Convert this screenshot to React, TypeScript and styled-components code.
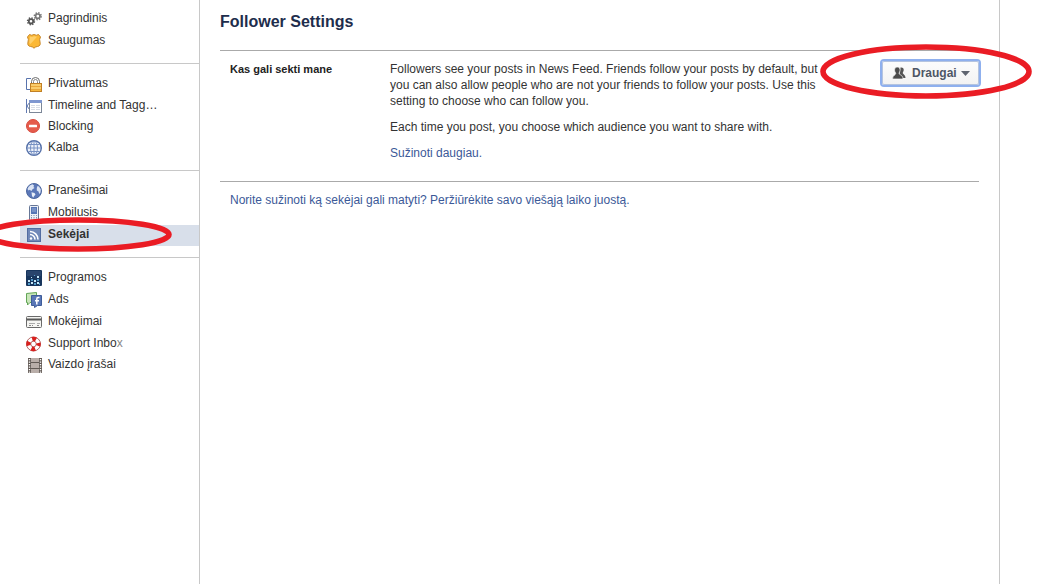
import React from 'react';
import styled, { createGlobalStyle, css } from 'styled-components';

const GlobalStyle = createGlobalStyle`
  * { box-sizing: border-box; }
  body {
    margin: 0;
    background: #fff;
    color: #333;
    font-family: "Liberation Sans", Arial, sans-serif;
    font-size: 12px;
    line-height: 16px;
    overflow-x: hidden;
  }
`;

const Page = styled.div`
  display: flex;
  min-height: 100vh;
  padding-right: 47px;
`;

const Sidebar = styled.nav`
  flex: 0 0 200px;
  padding: 9px 0 0 20px;
  border-right: 1px solid #c8c8c8;
`;

const NavGroup = styled.ul`
  list-style: none;
  margin: 0;
  padding: 0;
  & + & {
    margin-top: 10px;
    padding-top: 10px;
    border-top: 1px solid #c8c8c8;
  }
`;

const NavItem = styled.li<{ $tight?: boolean }>`
  position: relative;
  padding-bottom: ${p => (p.$tight ? 0 : 1)}px;
`;

const NavLink = styled.a<{ $selected?: boolean }>`
  display: flex;
  align-items: flex-start;
  gap: 6px;
  height: 21px;
  padding: 1px 0 0 6px;
  color: #333;
  text-decoration: none;
  ${p => p.$selected && css`
    background: #d8dfea;
    font-weight: bold;
  `}
`;

const NavIcon = styled.svg`
  flex: none;
  width: 16px;
  height: 16px;
  margin-top: 1px;
`;

const Faded = styled.span`
  color: #888;
`;

const Main = styled.main`
  flex: 1;
  min-width: 0;
  padding: 10px 20px;
  border-right: 1px solid #c8c8c8;
`;

const Title = styled.h1`
  margin: 0;
  padding: 2px 0 18px;
  color: #1e2d4c;
  font-size: 16px;
  line-height: 20px;
`;

const Setting = styled.section`
  display: flex;
  align-items: flex-start;
  padding: 10px 0 20px 10px;
  border-top: 1px solid #aaa;
  border-bottom: 1px solid #aaa;
`;

const SettingName = styled.h2`
  flex: 0 0 160px;
  margin: 0;
  color: #222;
  font-size: 11px;
  line-height: 16px;
`;

const Description = styled.div`
  flex: 0 1 440px;
  display: flex;
  flex-direction: column;
  gap: 10px;
`;

const Paragraph = styled.p`
  margin: 0;
`;

const TextLink = styled.a`
  color: #3b5998;
  text-decoration: none;
`;

const Footer = styled.p`
  margin: 0;
  padding: 10px;
`;

const Audience = styled.div`
  position: relative;
  flex: none;
  width: 97px;
  height: 24px;
  margin-left: auto;
`;

const AudienceSelect = styled.select`
  display: block;
  appearance: none;
  width: 100%;
  height: 100%;
  padding: 0 20px 0 29px;
  border: 1px solid #b5c4df;
  border-radius: 2px;
  background: linear-gradient(#fcfcfc, #f3f3f3);
  box-shadow: 0 0 0 2px #8fb0ee;
  color: #4e5665;
  font: bold 12px/20px "Liberation Sans", Arial, sans-serif;
`;

const ControlIcon = styled.svg<{ $side: 'left' | 'right' }>`
  position: absolute;
  top: 5px;
  ${p => (p.$side === 'left' ? 'left: 10px' : 'right: 8px')};
  pointer-events: none;
`;

const Highlight = styled.svg<{ $left: number; $top: number }>`
  position: absolute;
  z-index: 1;
  left: ${p => p.$left}px;
  top: ${p => p.$top}px;
  pointer-events: none;
`;

function Circled({ left, top, width, height }: { left: number; top: number; width: number; height: number }) {
  return (
    <Highlight $left={left} $top={top} width={width} height={height} aria-hidden="true">
      <ellipse cx={width / 2} cy={height / 2} rx={width / 2 - 3} ry={height / 2 - 3} fill="none" stroke="#ea1c24" strokeWidth="5.6" />
    </Highlight>
  );
}

const icons = {
  gears: (
    <g fill="none">
      <circle cx="5" cy="10.3" r="3.4" stroke="#555" strokeWidth="1.6" strokeDasharray="1.35 1.32" />
      <circle cx="5" cy="10.3" r="2.2" stroke="#555" strokeWidth="1.8" />
      <circle cx="11.8" cy="5.2" r="3.4" stroke="#777" strokeWidth="1.6" strokeDasharray="1.35 1.32" />
      <circle cx="11.8" cy="5.2" r="2.2" stroke="#777" strokeWidth="1.7" />
    </g>
  ),
  badge: (
    <g>
      <path d="M3.5 1.5Q5.500 3 8 1.500 10.500 3 12.500 1.500L14.500 4Q13 6.500 14 9 15 13 11.500 13.500 9.500 13.500 8 15.200 6.500 13.500 4.500 13.500 1 13 2 9 3 6.500 1.500 4Z" fill="#fbb836" stroke="#c88728" />
      <path d="M4 3.500Q6 4.500 8 3.200L11 3.700 4.500 11Q2.800 10.500 3.500 8Z" fill="#ffd06a" />
    </g>
  ),
  lock: (
    <g>
      <path d="M5 2.500H.5v11H5" fill="#fff" stroke="#5873ad" />
      <path d="M5.500 8V5.500a4 4 0 0 1 8 0V8" fill="#fff" stroke="#6c6c6c" />
      <path d="M7.500 8V5.500a2 2 0 0 1 4 0V8" fill="#fff" stroke="#888" />
      <rect x="4.500" y="7.500" width="11" height="8" fill="#f7b83c" stroke="#c18025" />
      <path d="M5 9h10M5 12h10" stroke="#ffe19a" />
      <path d="M5 10.500h10M5 13.500h10" stroke="#e9a63a" />
    </g>
  ),
  timeline: (
    <g>
      <path d="M.5 1v14M3.500 4.500 1 8l2.500 3.500" fill="none" stroke="#6079b1" />
      <rect x="3.500" y="2.500" width="12" height="12" fill="#fff" stroke="#7c8798" />
      <path d="M3 3.500h13" stroke="#7f97d0" strokeWidth="3" />
      <path d="M5 7.500h4M10 7.500h4M5 9.500h4M10 9.500h4M5 11.500h4M10 11.500h4" stroke="#d8dde6" />
    </g>
  ),
  block: (
    <g>
      <circle cx="7" cy="7" r="6.500" fill="#e55b4b" stroke="#d74c3f" />
      <rect x="3" y="5.700" width="8" height="2.600" rx=".5" fill="#fff" />
    </g>
  ),
  grid: (
    <g fill="none" stroke="#7892c4" strokeWidth="1">
      <circle cx="8" cy="8" r="7.300" fill="#eef2fa" stroke="#5470a8" strokeWidth="1.400" />
      <ellipse cx="8" cy="8" rx="3.500" ry="7" />
      <path d="M8 1v14M1 8h14M2.500 4.500h11M2.500 11.500h11" />
    </g>
  ),
  globe: (
    <g>
      <circle cx="8" cy="8" r="7.500" fill="#5b78b8" stroke="#4c679f" />
      <path d="M2.500 4Q4 2 6.500 1.300L8 2.500 7.500 4 8.500 5 6.500 6.200 5.500 8 3.500 6.800 2.500 7.500 1.500 6Z" fill="#dbe4f4" />
      <path d="M5.500 9.300 8.500 10 9.500 11.500 8 13.200 7.200 14.800 6 13Z" fill="#e8eef8" />
      <path d="M11.500 3 13 3.500 14.800 6.500 14.500 9.500 13.300 11 12.500 8.500 10.800 7.500 10.800 5Z" fill="#dbe4f4" />
    </g>
  ),
  phone: (
    <g>
      <rect x="3.500" y=".5" width="9" height="15" rx="1" fill="#edf0f6" stroke="#667696" />
      <rect x="5" y="2" width="6" height="7" fill="#5676b5" />
      <path d="M6 3h4v4H6Z" fill="#7791c5" />
      <path d="M5 10.500h6M5 12.500h6M5 14h6" stroke="#8291ae" strokeDasharray="1 1.500" />
    </g>
  ),
  feed: (
    <g>
      <rect x="1.500" y="1.500" width="13" height="13" fill="#7088b8" stroke="#526ca1" />
      <circle cx="5" cy="11.500" r="1.200" fill="#fff" />
      <path d="M4 7.500a5 5 0 0 1 5 5M4 4.500a8 8 0 0 1 8 8" fill="none" stroke="#fff" strokeWidth="1.600" />
    </g>
  ),
  apps: (
    <g>
      <rect x="0" y="0" width="16" height="16" rx="1" fill="#18365d" />
      <path d="M1 1h14v5H1Z" fill="#29456d" />
      <path d="M2 10h2v2H2ZM5 12h2v2H5ZM8 10h2v2H8ZM11 12h2v2h-2ZM5 7h1v1H5ZM11 6h2v2h-2Z" fill="#c7eafa" />
      <path d="M2 13h2v2H2ZM5 9h2v2H5ZM8 13h2v2H8ZM11 9h2v2h-2ZM8 5h1v1H8ZM13 13h1v2h-1Z" fill="#509bc9" />
    </g>
  ),
  ads: (
    <g>
      <path d="M.5 1.500 10.500.5v10H4L1.500 13v-2.500h-1Z" fill="#c8e5b9" stroke="#62a556" />
      <path d="M5.500 3.500h10v10h-4L8.500 15.500v-2h-3Z" fill="#5977b6" stroke="#3e5c99" />
      <path d="M13.500 5.500H12q-1.200 0-1.200 1.500v5.500M9 8.800h4" fill="none" stroke="#fff" strokeWidth="1.500" />
    </g>
  ),
  card: (
    <g>
      <rect x=".5" y="2.500" width="15" height="11" rx="1" fill="#f5f5f2" stroke="#6a6a6a" />
      <path d="M1 5.500h14" stroke="#595959" strokeWidth="2" />
      <path d="M3 9.500h6M11 9.500h3" stroke="#aaa" />
      <path d="M3 11.500h4M11 11.500h2" stroke="#888" strokeDasharray="2 1" />
    </g>
  ),
  ring: (
    <g fill="none">
      <circle cx="7.500" cy="8" r="5" stroke="#fff" strokeWidth="4" />
      <circle cx="7.500" cy="8" r="7" stroke="#a14340" strokeWidth=".8" />
      <circle cx="7.500" cy="8" r="2.800" stroke="#a14340" strokeWidth=".8" />
      <circle cx="7.500" cy="8" r="5" stroke="#d8201e" strokeWidth="4.400" strokeDasharray="3.927 3.927" strokeDashoffset="1.963" />
    </g>
  ),
  film: (
    <g>
      <path d="M2 1h14v15H2Z" fill="#625a55" />
      <path d="M5 1h8v4H5ZM5 6h8v5H5ZM5 12h8v4H5Z" fill="#b9aea9" />
      <path d="M3.500 2v14M14.500 2v14" stroke="#fff" strokeWidth="1.400" strokeDasharray="1.300 1.200" />
    </g>
  ),
};

type Entry = { icon: keyof typeof icons; label: React.ReactNode; selected?: boolean; tight?: boolean };

const groups: Entry[][] = [
  [
    { icon: 'gears', label: 'Pagrindinis' },
    { icon: 'badge', label: 'Saugumas' },
  ],
  [
    { icon: 'lock', label: 'Privatumas' },
    { icon: 'timeline', label: 'Timeline and Tagg…', tight: true },
    { icon: 'block', label: 'Blocking', tight: true },
    { icon: 'grid', label: 'Kalba' },
  ],
  [
    { icon: 'globe', label: 'Pranešimai' },
    { icon: 'phone', label: 'Mobilusis' },
    { icon: 'feed', label: 'Sekėjai', selected: true },
  ],
  [
    { icon: 'apps', label: 'Programos' },
    { icon: 'ads', label: 'Ads' },
    { icon: 'card', label: 'Mokėjimai' },
    { icon: 'ring', label: <span>Support Inbo<Faded>x</Faded></span>, tight: true },
    { icon: 'film', label: 'Vaizdo įrašai' },
  ],
];

export default function App() {
  return (
    <>
      <GlobalStyle />
      <Page>
        <Sidebar>
          {groups.map((group, g) => (
            <NavGroup key={g}>
              {group.map(item => (
                <NavItem key={item.icon} $tight={item.tight}>
                  <NavLink href="#" $selected={item.selected} aria-current={item.selected ? 'page' : undefined}>
                    <NavIcon viewBox="0 0 16 16" aria-hidden="true">{icons[item.icon]}</NavIcon>
                    {item.label}
                  </NavLink>
                  {item.selected && <Circled left={-36} top={-8} width={188} height={35} />}
                </NavItem>
              ))}
            </NavGroup>
          ))}
        </Sidebar>
        <Main>
          <Title>Follower Settings</Title>
          <Setting>
            <SettingName><label htmlFor="audience">Kas gali sekti mane</label></SettingName>
            <Description>
              <Paragraph>
                Followers see your posts in News Feed. Friends follow your posts by default, but you can also
                allow people who are not your friends to follow your posts. Use this setting to choose who can
                follow you.
              </Paragraph>
              <Paragraph>Each time you post, you choose which audience you want to share with.</Paragraph>
              <Paragraph><TextLink href="#">Sužinoti daugiau.</TextLink></Paragraph>
            </Description>
            <Audience>
              <AudienceSelect id="audience">
                <option>Draugai</option>
              </AudienceSelect>
              <ControlIcon $side="left" width="14" height="14" viewBox="0 0 14 14" aria-hidden="true">
                <path d="M8.500 1.500c2.200-.4 3.500.8 3.200 2.800-.1 1.200-.9 1.900-.9 2.700 0 1.300 2.700 1.500 2.700 5H10L7.500 8Z" fill="#555" />
                <path d="M5.200 1c2.200 0 3.100 1.500 2.800 3.500-.2 1.500-.9 2-.9 3 0 1.300 3.900 1.500 3.900 5.500H.5c0-3.800 3.200-4 3.200-5.500 0-1-1-1.500-1.100-3C2.400 2.500 3.200 1 5.200 1Z" fill="#4b4b4b" stroke="#f8f8f8" strokeWidth=".7" />
              </ControlIcon>
              <ControlIcon $side="right" width="11" height="14" viewBox="0 0 11 14" aria-hidden="true">
                <path d="M1 5h9L5.500 10Z" fill="#5f6570" />
              </ControlIcon>
              <Circled left={-62} top={-17} width={212} height={55} />
            </Audience>
          </Setting>
          <Footer>
            <TextLink href="#">Norite sužinoti ką sekėjai gali matyti? Peržiūrėkite savo viešąją laiko juostą.</TextLink>
          </Footer>
        </Main>
      </Page>
    </>
  );
}
